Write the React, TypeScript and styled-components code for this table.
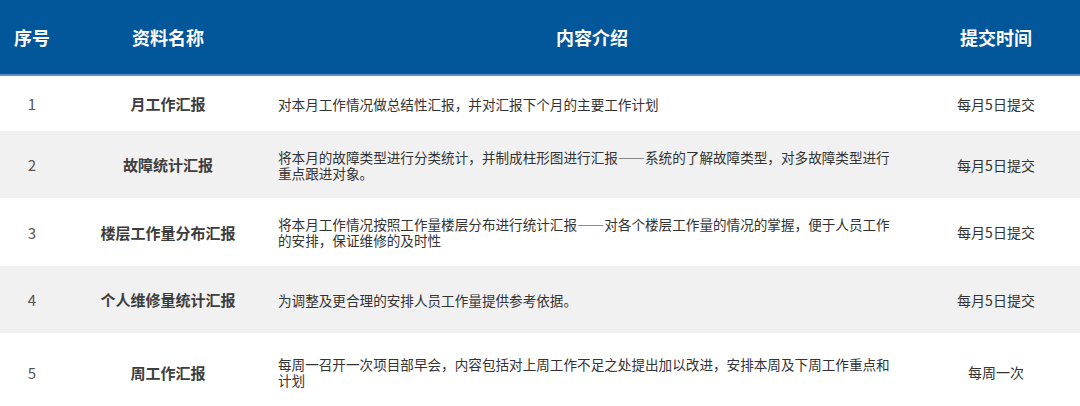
import styled, { createGlobalStyle } from 'styled-components'

interface IReport {
  no: number
  name: string
  content: string
  time: string
  height: number
}

const reports: IReport[] = [
  {
    no: 1,
    name: '月工作汇报',
    content: '对本月工作情况做总结性汇报，并对汇报下个月的主要工作计划',
    time: '每月5日提交',
    height: 55,
  },
  {
    no: 2,
    name: '故障统计汇报',
    content:
      '将本月的故障类型进行分类统计，并制成柱形图进行汇报——系统的了解故障类型，对多故障类型进行\n重点跟进对象。',
    time: '每月5日提交',
    height: 67,
  },
  {
    no: 3,
    name: '楼层工作量分布汇报',
    content:
      '将本月工作情况按照工作量楼层分布进行统计汇报——对各个楼层工作量的情况的掌握，便于人员工作\n的安排，保证维修的及时性',
    time: '每月5日提交',
    height: 68,
  },
  {
    no: 4,
    name: '个人维修量统计汇报',
    content: '为调整及更合理的安排人员工作量提供参考依据。',
    time: '每月5日提交',
    height: 67,
  },
  {
    no: 5,
    name: '周工作汇报',
    content:
      '每周一召开一次项目部早会，内容包括对上周工作不足之处提出加以改进，安排本周及下周工作重点和\n计划',
    time: '每周一次',
    height: 78,
  },
]

export default function App() {
  return (
    <>
      <GlobalStyle />
      <Table lang="zh-CN">
        <HeaderRow>
          <HeadCell>序号</HeadCell>
          <HeadCell>资料名称</HeadCell>
          <HeadCell>内容介绍</HeadCell>
          <HeadCell>提交时间</HeadCell>
        </HeaderRow>
        {reports.map((r, i) => (
          <Row key={r.no} $height={r.height} $striped={i % 2 === 1}>
            <NoCell>{r.no}</NoCell>
            <NameCell>{r.name}</NameCell>
            <ContentCell>{r.content}</ContentCell>
            <TimeCell>{r.time}</TimeCell>
          </Row>
        ))}
      </Table>
    </>
  )
}

const GlobalStyle = createGlobalStyle`
  html, body {
    margin: 0;
    padding: 0;
    background: #ffffff;
    overflow: hidden;
  }
  body {
    font-family: "Noto Sans CJK SC", "Noto Sans", sans-serif;
  }
`

const columns = '64px 208px 640px 168px'

const Table = styled.div`
  width: 1080px;
  display: flex;
  flex-direction: column;
`

const HeaderRow = styled.div`
  display: grid;
  grid-template-columns: ${columns};
  align-items: center;
  height: 76px;
  box-sizing: border-box;
  background: #02569a;
  border-bottom: 2px solid #5b8fc3;
`

const HeadCell = styled.div`
  text-align: center;
  color: #ffffff;
  font-size: 18px;
  font-weight: 700;
  padding-bottom: 1px;
`

const Row = styled.div<{ $height: number; $striped: boolean }>`
  display: grid;
  grid-template-columns: ${columns};
  align-items: center;
  min-height: ${(p) => p.$height}px;
  background: ${(p) => (p.$striped ? '#f1f1f1' : '#ffffff')};
  color: #333333;
  font-size: 14px;
`

const NoCell = styled.div`
  text-align: center;
  font-size: 15px;
  color: #555555;
`

const NameCell = styled.div`
  text-align: center;
  font-size: 15px;
  font-weight: 700;
  color: #3d3d3d;
`

const ContentCell = styled.div`
  padding-left: 6px;
  font-size: 13.6px;
  line-height: 16px;
  white-space: pre-line;
  font-feature-settings: "fwid";
`

const TimeCell = styled.div`
  text-align: center;
`
